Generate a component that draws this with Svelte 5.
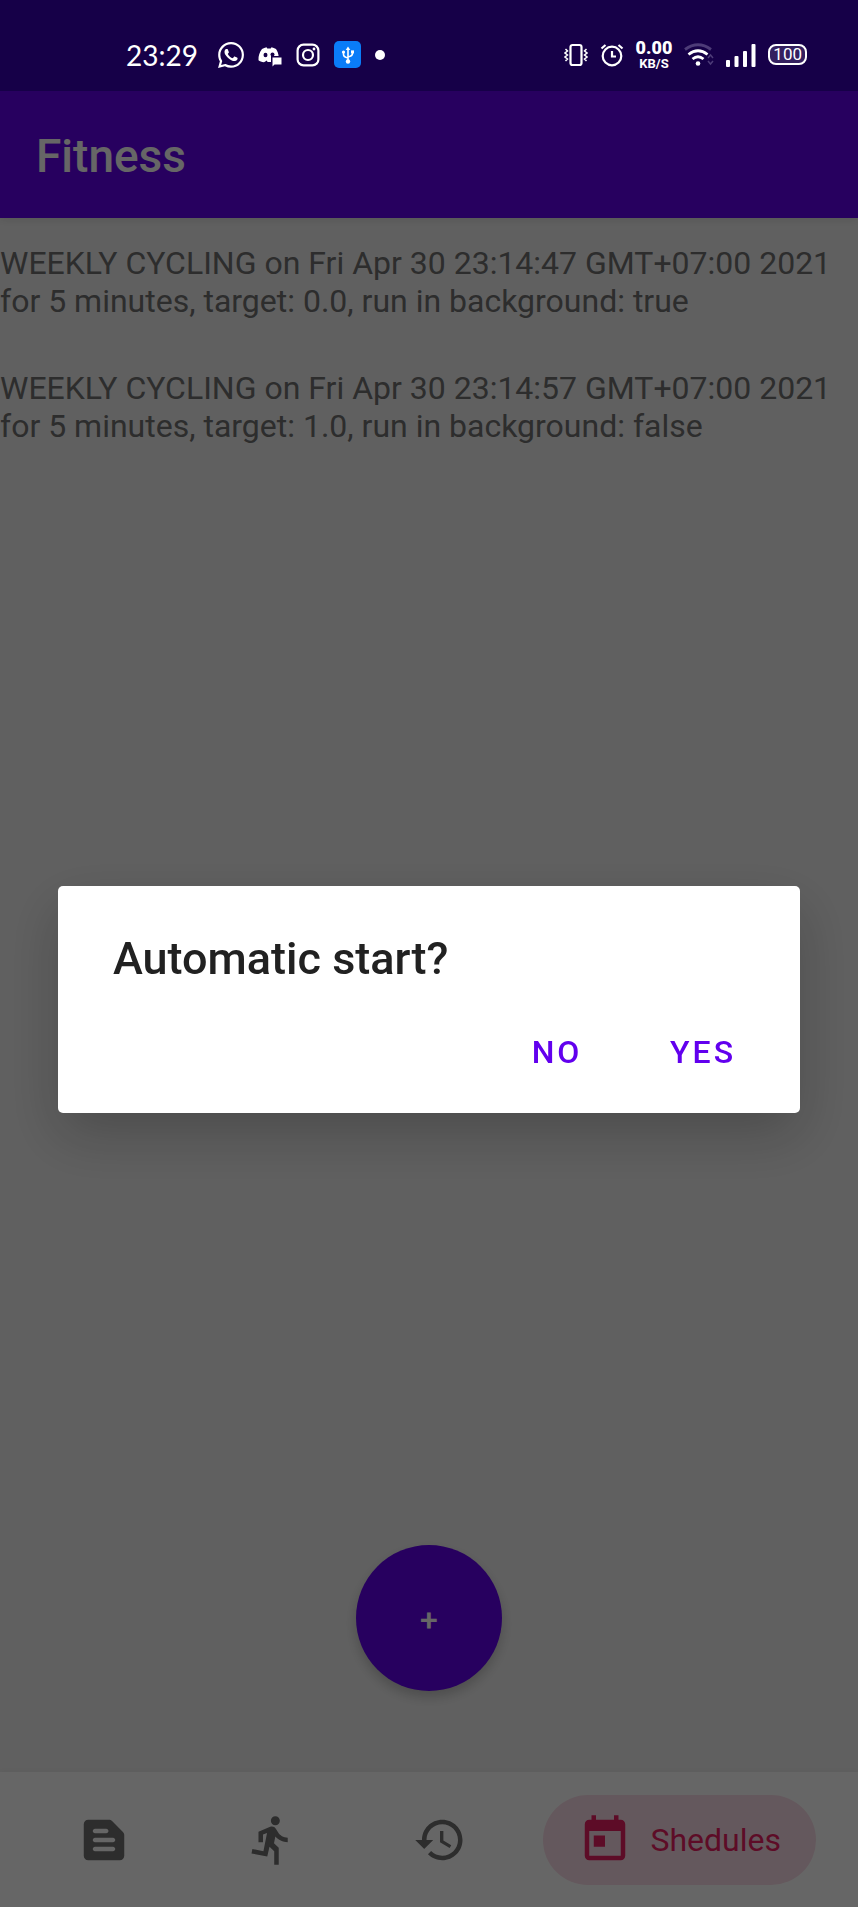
<script>
  const schedules = [
    'WEEKLY CYCLING on Fri Apr 30 23:14:47 GMT+07:00 2021 for 5 minutes, target: 0.0, run in background: true',
    'WEEKLY CYCLING on Fri Apr 30 23:14:57 GMT+07:00 2021 for 5 minutes, target: 1.0, run in background: false'
  ];

  const tabs = [
    {
      id: 'news',
      path: 'M20.41 8.41l-4.83-4.83c-.37-.37-.88-.58-1.41-.58H5c-1.1 0-2 .9-2 2v14c0 1.1.9 2 2 2h14c1.1 0 2-.9 2-2V9.83c0-.53-.21-1.04-.59-1.42zM8 7h5c.55 0 1 .45 1 1s-.45 1-1 1H8c-.55 0-1-.45-1-1s.45-1 1-1zm8 10H8c-.55 0-1-.45-1-1s.45-1 1-1h8c.55 0 1 .45 1 1s-.45 1-1 1zm0-4H8c-.55 0-1-.45-1-1s.45-1 1-1h8c.55 0 1 .45 1 1s-.45 1-1 1z'
    },
    {
      id: 'training',
      path: 'M13.49 5.48c1.1 0 2-.9 2-2s-.9-2-2-2-2 .9-2 2 .9 2 2 2zm-3.6 13.9l1-4.4 2.1 2v6h2v-7.5l-2.1-2 .6-3c1.3 1.5 3.3 2.5 5.5 2.5v-2c-1.9 0-3.5-1-4.3-2.4l-1-1.6c-.4-.6-1-1-1.7-1-.3 0-.5.1-.8.1l-5.2 2.2v4.7h2v-3.4l1.8-.7-1.6 8.1-4.9-1-.4 2 7 1.4z'
    },
    {
      id: 'history',
      path: 'M13 3c-4.97 0-9 4.03-9 9H1l3.89 3.89.07.14L9 12H6c0-3.87 3.13-7 7-7s7 3.13 7 7-3.13 7-7 7c-1.93 0-3.68-.79-4.94-2.06l-1.42 1.42C8.27 19.99 10.51 21 13 21c4.97 0 9-4.03 9-9s-4.03-9-9-9zm-1 5v5l4.28 2.54.72-1.21-3.5-2.08V8H12z'
    },
    {
      id: 'schedules',
      label: 'Shedules',
      path: 'M19 3h-1V1h-2v2H8V1H6v2H5c-1.11 0-1.99.9-1.99 2L3 19c0 1.1.89 2 2 2h14c1.1 0 2-.9 2-2V5c0-1.1-.9-2-2-2zm0 16H5V8h14v11zM7 10h5v5H7v-5z'
    }
  ];

  let asking = $state(true);
</script>

<div class="app">
  <div class="status">
    <div class="left">
      <span class="time">23:29</span>
      <svg width="26" height="26" viewBox="0 0 24 24" fill="#fff"><path d="M17.472 14.382c-.297-.149-1.758-.867-2.03-.967-.273-.099-.471-.148-.67.15-.197.297-.767.966-.94 1.164-.173.199-.347.223-.644.075-.297-.15-1.255-.463-2.39-1.475-.883-.788-1.48-1.761-1.653-2.059-.173-.297-.018-.458.13-.606.134-.133.298-.347.446-.52.149-.174.198-.298.298-.497.099-.198.05-.371-.025-.52-.075-.149-.669-1.612-.916-2.207-.242-.579-.487-.5-.669-.51-.173-.008-.371-.01-.57-.01-.198 0-.52.074-.792.372-.272.297-1.04 1.016-1.04 2.479 0 1.462 1.065 2.875 1.213 3.074.149.198 2.096 3.2 5.077 4.487.709.306 1.262.489 1.694.625.712.227 1.36.195 1.871.118.571-.085 1.758-.719 2.006-1.413.248-.694.248-1.289.173-1.413-.074-.124-.272-.198-.57-.347m-5.421 7.403h-.004a9.87 9.87 0 01-5.031-1.378l-.361-.214-3.741.982.998-3.648-.235-.374a9.86 9.86 0 01-1.51-5.26c.001-5.45 4.436-9.884 9.888-9.884 2.64 0 5.122 1.03 6.988 2.898a9.825 9.825 0 012.893 6.994c-.003 5.45-4.437 9.884-9.885 9.884m8.413-18.297A11.815 11.815 0 0012.05 0C5.495 0 .16 5.335.157 11.892c0 2.096.547 4.142 1.588 5.945L.057 24l6.305-1.654a11.882 11.882 0 005.683 1.448h.005c6.554 0 11.89-5.335 11.893-11.893a11.821 11.821 0 00-3.48-8.413z" /></svg>
      <svg width="24" height="24" viewBox="0 0 24 24" fill="#fff">
        <path d="M4 6C5.500 5 7 4.500 8.500 4.200L9.300 5.500h3.400l.8-1.300c1.500.3 3 .8 4.500 1.800 1.500 2.300 2.500 5 2.600 7H13v6H9.500l-.6-1.400L6 19.200c-2.500-.3-4.200-1-5.500-2C.3 13 1.500 9 4 6z" />
        <ellipse cx="7.500" cy="12" rx="2" ry="2.200" fill="#160048" />
        <ellipse cx="14.500" cy="11.500" rx="2" ry="2" fill="#160048" />
        <path d="M14.500 14.500h9v7h-7l-2 2z" />
      </svg>
      <svg width="24" height="24" viewBox="0 0 24 24" fill="none" stroke="#fff" stroke-width="2.200">
        <rect x="1.600" y="1.600" width="20.800" height="20.800" rx="6" />
        <circle cx="12" cy="12" r="5" />
        <circle cx="18" cy="6" r="1.400" fill="#fff" stroke="none" />
      </svg>
      <svg width="27" height="27" viewBox="0 0 27 27">
        <rect width="27" height="27" rx="5" fill="#0a7cf8" />
        <path d="M14 8v12M9.500 11v2.500q0 2.500 4.500 3.500M18.500 11v1.500q0 2.500-4.500 3.500" fill="none" stroke="#fff" stroke-width="1.600" />
        <path d="M14 5.500l2.300 3.500h-4.600z" fill="#fff" />
        <circle cx="14" cy="20.500" r="2.200" fill="#fff" />
        <circle cx="9.500" cy="11" r="1.600" fill="#fff" />
        <path d="M17 9.400h3v3h-3z" fill="#fff" />
      </svg>
      <span class="dot"></span>
    </div>
    <div class="right">
      <svg width="24" height="24" viewBox="0 0 24 24" fill="none" stroke="#fff" stroke-width="2.200">
        <rect x="6.500" y="2" width="11" height="20" rx="2" />
        <path d="M1.500 6l2 2-2.500 2 2.500 2-2.500 2 2.500 2-2 2M22.500 6l-2 2 2.500 2-2.500 2 2.500 2-2.500 2 2 2" stroke-width="1.500" />
      </svg>
      <svg width="24" height="24" viewBox="0 0 24 24" fill="none" stroke="#fff" stroke-width="2.200">
        <circle cx="12" cy="13" r="9.300" />
        <path d="M12 8v5.500h4M1.500 5.500l4-3.500M22.500 5.500l-4-3.500" />
      </svg>
      <span class="speed"><b>0.00</b><small>KB/S</small></span>
      <svg width="30" height="24" viewBox="0 0 30 24" fill="none" stroke="#fff" stroke-width="2.800">
        <path d="M1 6.500Q14 -3 27 6.500" stroke="#4d3b78" />
        <path d="M4.500 11.500q9.500-7.500 19 0M8.500 16q5.500-4.500 11 0" />
        <circle cx="14" cy="20.500" r="2.300" fill="#fff" stroke="none" />
        <path d="M24 15l2.500-3 2.500 3M24 18l2.500 3 2.500-3" stroke="#4d3b78" stroke-width="1.500" />
      </svg>
      <svg width="30" height="24" viewBox="0 0 30 24" fill="#fff">
        <rect y="17" width="4" height="7" rx="1" />
        <rect x="8.500" y="13" width="4" height="11" rx="1" />
        <rect x="17" y="8" width="4" height="16" rx="1" />
        <rect x="25.500" y="1" width="4" height="23" rx="1" />
      </svg>
      <span class="battery">100</span>
    </div>
  </div>

  <header><h1>Fitness</h1></header>

  <main>
    <ul>
      {#each schedules as item}
        <li>{item}</li>
      {/each}
    </ul>
    <button class="fab" onclick={() => (asking = true)}>+</button>
  </main>

  <nav>
    {#each tabs as tab (tab.id)}
      <a href="#{tab.id}" class:active={tab.label}>
        <svg width="54" height="54" viewBox="0 0 24 24" fill="currentColor"><path d={tab.path} /></svg>
        {#if tab.label}<span>{tab.label}</span>{/if}
      </a>
    {/each}
  </nav>

  {#if asking}
    <div class="scrim">
      <div class="dialog" role="dialog" aria-modal="true" aria-labelledby="ask">
        <h2 id="ask">Automatic start?</h2>
        <div class="actions">
          <button onclick={() => (asking = false)}>NO</button>
          <button onclick={() => (asking = false)}>YES</button>
        </div>
      </div>
    </div>
  {/if}
</div>

<style>
  :global(body) {
    margin: 0;
  }
  .app {
    display: flex;
    flex-direction: column;
    min-height: 100vh;
    background: #f0f0f0;
    font-family: Roboto, sans-serif;
    font-size: 32px;
  }
  svg {
    display: block;
    flex: none;
  }
  h1,
  h2 {
    margin: 0;
    font-size: 46px;
    line-height: 54px;
    font-weight: 500;
  }
  h2 {
    font-size: 45px;
  }
  button {
    border: 0;
    font: inherit;
    font-weight: 500;
    cursor: pointer;
  }

  .status {
    position: relative;
    z-index: 2;
    display: flex;
    align-items: center;
    justify-content: space-between;
    box-sizing: border-box;
    height: 91px;
    padding: 18px 51px 0 126px;
    background: #160048;
    color: #fff;
  }
  .left,
  .right {
    display: flex;
    align-items: center;
  }
  .left {
    gap: 14px;
  }
  .right {
    gap: 12px;
  }
  .time {
    margin-right: 6px;
    font-family: Lato, sans-serif;
    font-size: 28px;
    line-height: 32px;
  }
  .dot {
    width: 10px;
    height: 10px;
    border-radius: 50%;
    background: #fff;
  }
  .speed {
    display: flex;
    flex-direction: column;
    align-items: center;
    font-weight: 700;
  }
  .speed b {
    font-size: 18px;
    line-height: 18px;
  }
  .speed small {
    font-size: 13px;
    line-height: 13px;
  }
  .battery {
    padding: 0 3px;
    border: 2px solid #fff;
    border-radius: 8px;
    background: #34205f;
    font-size: 17px;
    line-height: 17px;
  }

  header {
    display: flex;
    align-items: center;
    box-sizing: border-box;
    height: 127px;
    padding: 3px 36px 0;
    background: #6200ee;
    color: #fff;
    box-shadow: 0 2px 8px rgba(0, 0, 0, 0.1);
  }

  main {
    flex: 1;
    display: flex;
    flex-direction: column;
    justify-content: space-between;
    align-items: center;
    padding: 26px 0 81px;
  }
  ul {
    display: flex;
    flex-direction: column;
    gap: 49px;
    width: 100%;
    margin: 0;
    padding: 0;
    list-style: none;
    color: #707070;
  }
  li {
    line-height: 38px;
  }
  .fab {
    width: 146px;
    height: 146px;
    padding: 3px 0 0;
    border-radius: 50%;
    background: #6200ee;
    color: #fff;
    box-shadow: 0 6px 12px rgba(0, 0, 0, 0.2);
  }

  nav {
    display: flex;
    align-items: center;
    height: 135px;
    padding: 0 42px 0 20px;
    background: #fff;
    box-shadow: 0 -2px 6px rgba(0, 0, 0, 0.03);
  }
  nav a {
    flex: 1;
    display: flex;
    align-items: center;
    justify-content: center;
    color: #707070;
    text-decoration: none;
  }
  nav a.active {
    flex: none;
    gap: 18px;
    height: 90px;
    margin-left: 20px;
    padding: 0 35px;
    border-radius: 45px;
    background: #fbdde8;
    color: #e91e63;
  }

  .scrim {
    position: fixed;
    inset: 0;
    z-index: 1;
    display: flex;
    align-items: center;
    padding: 91px 58px 0;
    background: rgba(0, 0, 0, 0.6);
  }
  .dialog {
    flex: 1;
    padding: 46px 24px 20px 55px;
    border-radius: 5px;
    background: #fff;
    color: #212121;
    box-shadow: 0 22px 56px rgba(0, 0, 0, 0.22);
  }
  .actions {
    display: flex;
    justify-content: flex-end;
    margin-top: 25px;
  }
  .actions button {
    min-width: 146px;
    height: 82px;
    background: none;
    color: #6200ee;
    letter-spacing: 3px;
  }
</style>
